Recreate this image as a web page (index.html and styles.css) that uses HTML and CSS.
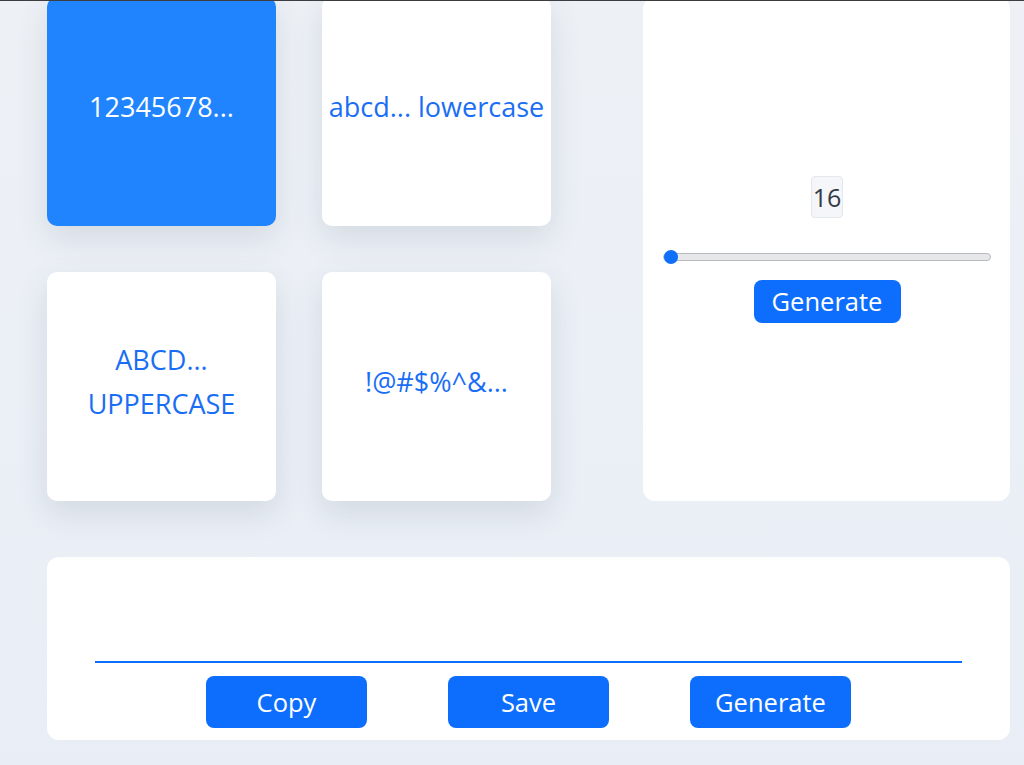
FILE: index.html
```html
<!DOCTYPE html>
<html lang="en">
<head>
<meta charset="utf-8">
<title>Password Generator</title>
<link rel="stylesheet" href="styles.css">
</head>
<body>
<div class="topline"></div>
<main class="app">
  <section class="top">
    <div class="options">
      <button class="opt active">12345678...</button>
      <button class="opt">abcd... lowercase</button>
      <button class="opt">ABCD...<br>UPPERCASE</button>
      <button class="opt">!@#$%^&amp;...</button>
    </div>
    <div class="length-panel">
      <span class="length-value">16</span>
      <input class="range" type="range" min="16" max="100" value="16">
      <button class="btn btn-small">Generate</button>
    </div>
  </section>
  <section class="output-panel">
    <input class="output" type="text" value="">
    <div class="actions">
      <button class="btn btn-wide">Copy</button>
      <button class="btn btn-wide">Save</button>
      <button class="btn btn-wide">Generate</button>
    </div>
  </section>
</main>
</body>
</html>
```

FILE: styles.css
```css
html, body {
  margin: 0;
  padding: 0;
}
body {
  background: linear-gradient(180deg, #edf1f6 0%, #e9eef6 100%);
  font-family: "Open Sans", "Noto Sans", sans-serif;
  height: 765px;
  overflow: hidden;
}
.topline {
  position: fixed;
  top: 0;
  left: 0;
  right: 0;
  height: 1px;
  background: #3c3d3f;
  z-index: 5;
}
.app {
  width: 963px;
  margin: -3px 0 0 47px;
}
.top {
  display: flex;
  gap: 92px;
}
.options {
  display: grid;
  grid-template-columns: 229px 229px;
  grid-template-rows: 229px 229px;
  gap: 46px;
}
.opt {
  border: none;
  border-radius: 10px;
  background: #ffffff;
  color: #1a6ef5;
  font-family: inherit;
  font-size: 27px;
  line-height: 44px;
  padding: 0 0 10px;
  box-shadow: 0 12px 32px rgba(40, 55, 80, 0.12);
}
.opt.active {
  background: #2084ff;
  color: #ffffff;
}
.length-panel {
  width: 367px;
  height: 504px;
  box-sizing: border-box;
  background: #ffffff;
  border-radius: 12px;
  padding: 0 19px 0 20px;
  display: flex;
  flex-direction: column;
  align-items: center;
  justify-content: center;
}
.length-value {
  width: 32px;
  height: 42px;
  box-sizing: border-box;
  background: #f5f6f9;
  border: 1px solid #e4e7ec;
  border-radius: 4px;
  color: #333a44;
  font-size: 25px;
  line-height: 40px;
  text-align: center;
}
.range {
  -webkit-appearance: none;
  appearance: none;
  width: 100%;
  height: 14px;
  margin: 32px 0 16px;
  background: transparent;
}
.range::-webkit-slider-runnable-track {
  height: 8px;
  box-sizing: border-box;
  background: #e6e7e9;
  border: 1px solid #b9bbbf;
  border-radius: 4px;
}
.range::-webkit-slider-thumb {
  -webkit-appearance: none;
  width: 14px;
  height: 14px;
  margin-top: -4px;
  border-radius: 50%;
  background: #0f6ffb;
  border: none;
}
.btn {
  border: none;
  background: #0d6efd;
  color: #ffffff;
  font-family: inherit;
  font-size: 25.5px;
  border-radius: 8px;
  padding: 0;
}
.btn-small {
  width: 147px;
  height: 43px;
  line-height: 43px;
}
.output-panel {
  margin-top: 56px;
  height: 183px;
  box-sizing: border-box;
  background: #ffffff;
  border-radius: 12px;
  padding: 0 48px 12px;
  display: flex;
  flex-direction: column;
  justify-content: flex-end;
}
.output {
  width: 100%;
  box-sizing: border-box;
  height: 40px;
  border: none;
  border-bottom: 2px solid #0d6efd;
  outline: none;
  font-family: inherit;
  font-size: 22px;
  background: transparent;
}
.actions {
  margin-top: 13px;
  display: flex;
  justify-content: center;
  gap: 81px;
}
.btn-wide {
  width: 161px;
  height: 52px;
}
```
